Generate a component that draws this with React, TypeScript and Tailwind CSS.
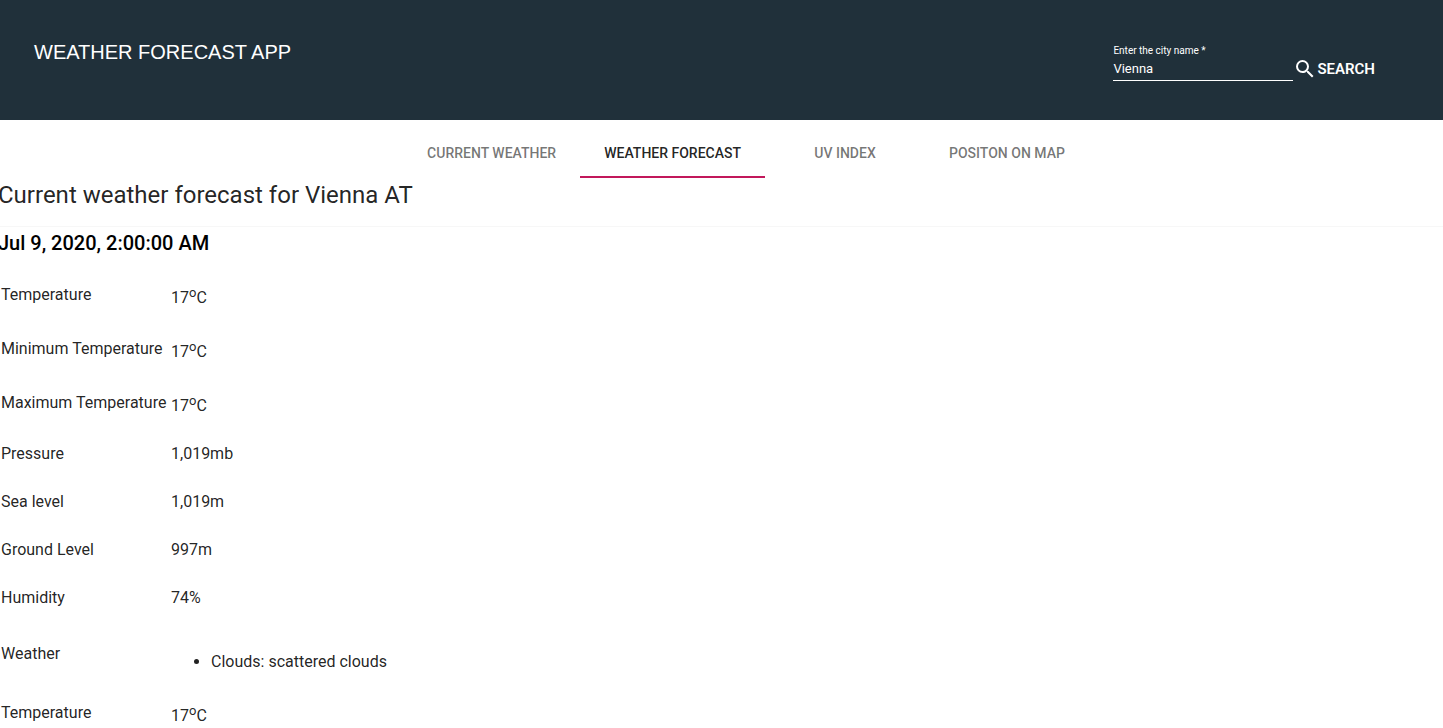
import { useState } from 'react';

const tabs = ['Current Weather', 'Weather Forecast', 'UV Index', 'Positon on Map'];

function Celsius({ value }: { value: number }) {
  return (
    <>
      {value}
      <sup className="static align-super text-[13px] leading-7">o</sup>C
    </>
  );
}

const measures = [
  { label: 'Temperature', value: <Celsius value={17} />, height: 'h-[54px]' },
  { label: 'Minimum Temperature', value: <Celsius value={17} />, height: 'h-[54px]' },
  { label: 'Maximum Temperature', value: <Celsius value={17} />, height: 'h-[54px]' },
  { label: 'Pressure', value: '1,019mb', height: 'h-12' },
  { label: 'Sea level', value: '1,019m', height: 'h-12' },
  { label: 'Ground Level', value: '997m', height: 'h-12' },
  { label: 'Humidity', value: '74%', height: 'h-12' },
];

function Header() {
  const [city, setCity] = useState('Vienna');
  return (
    <header className="flex h-[120px] items-start justify-between bg-[#20303a] pl-[34px] pr-[68px] text-white">
      <h1 className="pt-10 font-['Liberation_Sans',sans-serif] text-[20px] leading-6">WEATHER FORECAST APP</h1>
      <form className="flex items-start pt-11" onSubmit={(e) => e.preventDefault()}>
        <div className="flex w-[180px] flex-col border-b border-white">
          <label htmlFor="city" className="text-[10px] leading-[14px]">
            Enter the city name *
          </label>
          <input
            id="city"
            value={city}
            onChange={(e) => setCity(e.target.value)}
            className="mb-0.5 h-5 w-full bg-transparent text-[13px] outline-none"
          />
        </div>
        <button type="submit" className="flex items-center pt-[13px] text-[15px] leading-6 font-semibold">
          <svg viewBox="0 0 24 24" className="size-6" fill="currentColor" aria-hidden="true">
            <path d="M15.5 14h-.79l-.28-.27A6.471 6.471 0 0 0 16 9.5 6.5 6.5 0 1 0 9.5 16c1.61 0 3.09-.59 4.23-1.57l.27.28v.79l5 4.99L20.49 19l-4.99-5zm-6 0C7.01 14 5 11.99 5 9.5S7.01 5 9.5 5 14 7.01 14 9.5 11.99 14 9.5 14z" />
          </svg>
          SEARCH
        </button>
      </form>
    </header>
  );
}

export default function App() {
  const [active, setActive] = useState(1);
  return (
    <div className="h-screen overflow-hidden bg-white font-[Roboto,sans-serif] text-black/87">
      <Header />
      <nav className="flex justify-center pt-2.5 pl-[49px]" role="tablist">
        {tabs.map((tab, i) => (
          <button
            key={tab}
            type="button"
            role="tab"
            aria-selected={i === active}
            onClick={() => setActive(i)}
            className={
              i === active
                ? 'h-12 min-w-40 border-b-2 border-[#c2185b] px-6 text-[14px] font-medium text-black/87 uppercase'
                : 'h-12 min-w-40 border-b-2 border-transparent px-6 text-[14px] font-medium text-black/55 uppercase'
            }
          >
            {tab}
          </button>
        ))}
      </nav>
      <main>
        <h2 className="-ml-0.5 pt-1 pb-[18px] text-[24px] leading-[26px]">Current weather forecast for Vienna AT</h2>
        <section className="border-t border-black/3">
          <h3 className="-ml-0.5 pt-1 pb-3 text-[20px] leading-6 font-medium text-black">Jul 9, 2020, 2:00:00 AM</h3>
          <table className="mt-px text-[16px] leading-6">
            <tbody>
              {measures.map((m) => (
                <tr key={m.label} className={m.height}>
                  <th scope="row" className="w-[170px] pl-px text-left font-normal whitespace-nowrap">
                    {m.label}
                  </th>
                  <td className="pl-px">{m.value}</td>
                </tr>
              ))}
              <tr className="h-16">
                <th scope="row" className="pl-px text-left font-normal">
                  Weather
                </th>
                <td className="pl-px">
                  <ul className="mt-4 list-disc pl-10">
                    <li>Clouds: scattered clouds</li>
                  </ul>
                </td>
              </tr>
              <tr className="h-[54px]">
                <th scope="row" className="pl-px text-left font-normal">
                  Temperature
                </th>
                <td className="pl-px">
                  <Celsius value={17} />
                </td>
              </tr>
            </tbody>
          </table>
        </section>
      </main>
    </div>
  );
}
